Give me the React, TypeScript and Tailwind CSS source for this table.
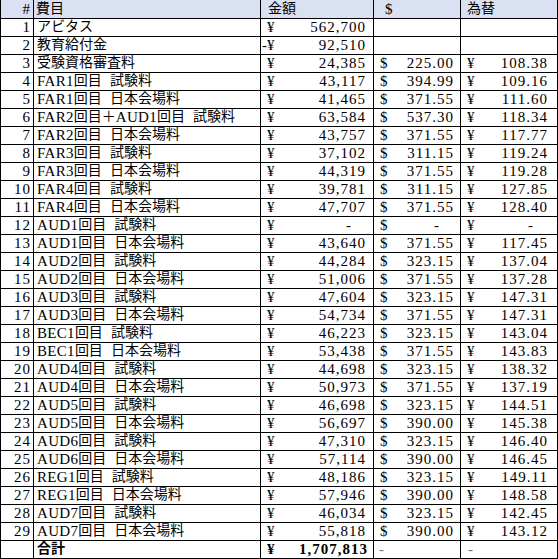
import React from "react";

type Row = {
  no: number;
  name: string;
  yen: string;
  neg?: boolean;
  usd?: string;
  rate?: string;
};

const ROWS: Row[] = [
  { no: 1, name: "アビタス", yen: "562,700" },
  { no: 2, name: "教育給付金", yen: "92,510", neg: true },
  { no: 3, name: "受験資格審査料", yen: "24,385", usd: "225.00", rate: "108.38" },
  { no: 4, name: "FAR1回目 試験料", yen: "43,117", usd: "394.99", rate: "109.16" },
  { no: 5, name: "FAR1回目 日本会場料", yen: "41,465", usd: "371.55", rate: "111.60" },
  { no: 6, name: "FAR2回目＋AUD1回目 試験料", yen: "63,584", usd: "537.30", rate: "118.34" },
  { no: 7, name: "FAR2回目 日本会場料", yen: "43,757", usd: "371.55", rate: "117.77" },
  { no: 8, name: "FAR3回目 試験料", yen: "37,102", usd: "311.15", rate: "119.24" },
  { no: 9, name: "FAR3回目 日本会場料", yen: "44,319", usd: "371.55", rate: "119.28" },
  { no: 10, name: "FAR4回目 試験料", yen: "39,781", usd: "311.15", rate: "127.85" },
  { no: 11, name: "FAR4回目 日本会場料", yen: "47,707", usd: "371.55", rate: "128.40" },
  { no: 12, name: "AUD1回目 試験料", yen: "-", usd: "-", rate: "-" },
  { no: 13, name: "AUD1回目 日本会場料", yen: "43,640", usd: "371.55", rate: "117.45" },
  { no: 14, name: "AUD2回目 試験料", yen: "44,284", usd: "323.15", rate: "137.04" },
  { no: 15, name: "AUD2回目 日本会場料", yen: "51,006", usd: "371.55", rate: "137.28" },
  { no: 16, name: "AUD3回目 試験料", yen: "47,604", usd: "323.15", rate: "147.31" },
  { no: 17, name: "AUD3回目 日本会場料", yen: "54,734", usd: "371.55", rate: "147.31" },
  { no: 18, name: "BEC1回目 試験料", yen: "46,223", usd: "323.15", rate: "143.04" },
  { no: 19, name: "BEC1回目 日本会場料", yen: "53,438", usd: "371.55", rate: "143.83" },
  { no: 20, name: "AUD4回目 試験料", yen: "44,698", usd: "323.15", rate: "138.32" },
  { no: 21, name: "AUD4回目 日本会場料", yen: "50,973", usd: "371.55", rate: "137.19" },
  { no: 22, name: "AUD5回目 試験料", yen: "46,698", usd: "323.15", rate: "144.51" },
  { no: 23, name: "AUD5回目 日本会場料", yen: "56,697", usd: "390.00", rate: "145.38" },
  { no: 24, name: "AUD6回目 試験料", yen: "47,310", usd: "323.15", rate: "146.40" },
  { no: 25, name: "AUD6回目 日本会場料", yen: "57,114", usd: "390.00", rate: "146.45" },
  { no: 26, name: "REG1回目 試験料", yen: "48,186", usd: "323.15", rate: "149.11" },
  { no: 27, name: "REG1回目 日本会場料", yen: "57,946", usd: "390.00", rate: "148.58" },
  { no: 28, name: "AUD7回目 試験料", yen: "46,034", usd: "323.15", rate: "142.45" },
  { no: 29, name: "AUD7回目 日本会場料", yen: "55,818", usd: "390.00", rate: "143.12" },
];

const GRID = "grid grid-cols-[33px_227px_113px_87px_97px]";
const CELL = "border-r border-b border-black overflow-hidden whitespace-nowrap";

// japanese runs are drawn a bit smaller than the latin text, like the sheet
function Mixed({ text }: { text: string }) {
  const parts = text.match(/[\u3000-\u9fff\uff00-\uffef]+|[^\u3000-\u9fff\uff00-\uffef]+/g) ?? [];
  return (
    <>
      {parts.map((p, i) =>
        /[\u3000-\u9fff\uff00-\uffef]/.test(p) ? (
          <span key={i} className="text-[14px]">
            {p}
          </span>
        ) : (
          <span key={i} className="tracking-[0.3px]">
            {p.replace(/ /g, "\u00a0\u00a0")}
          </span>
        ),
      )}
    </>
  );
}

function Money({
  sign,
  value,
  neg,
  pr,
}: {
  sign: string;
  value?: string;
  neg?: boolean;
  pr: string;
}) {
  if (!value) return <div className={CELL} />;
  const dash = value === "-";
  return (
    <div className={`${CELL} flex items-end justify-between pb-[1px] ${neg ? "pl-[1px]" : "pl-[6px]"} ${pr}`}>
      <span>{neg ? `-${sign}` : sign}</span>
      <span className={dash ? "mr-[14px]" : "tracking-[1px] -mr-[1px]"}>{value}</span>
    </div>
  );
}

export default function App() {
  return (
    <div
      className="w-[558px] bg-white text-black text-[15px] leading-[16px] border-l border-black"
      style={{ fontFamily: '"Liberation Serif", "Noto Sans CJK JP", serif' }}
    >
      <div className={`${GRID} h-[19px] bg-[#d9e1f2]`}>
        <div className={`${CELL} flex items-end justify-end pr-[3px] pb-[1px]`}>#</div>
        <div className={`${CELL} flex items-end pl-[2px] pb-[1px]`}>
          <Mixed text="費目" />
        </div>
        <div className={`${CELL} flex items-end pl-[7px] pb-[1px]`}>
          <Mixed text="金額" />
        </div>
        <div className={`${CELL} flex items-end pl-[11px] pb-[1px]`}>$</div>
        <div className={`${CELL} flex items-end pl-[6px] pb-[1px]`}>
          <Mixed text="為替" />
        </div>
      </div>

      {ROWS.map((r) => (
        <div key={r.no} className={`${GRID} h-[18px]`}>
          <div className={`${CELL} flex items-end justify-end pr-[2px] pb-[1px] tracking-[1px]`}>{r.no}</div>
          <div className={`${CELL} flex items-end pl-[3px] pb-[1px]`}>
            <Mixed text={r.name} />
          </div>
          <Money sign="¥" value={r.yen} neg={r.neg} pr="pr-[8px]" />
          <Money sign="$" value={r.usd} pr="pr-[7px]" />
          <Money sign="¥" value={r.rate} pr="pr-[10px]" />
        </div>
      ))}

      <div className={`${GRID} h-[18px] font-bold`}>
        <div className={CELL} />
        <div className={`${CELL} flex items-end pl-[3px] pb-[1px]`}>
          <Mixed text="合計" />
        </div>
        <div className={`${CELL} flex items-end justify-between pl-[6px] pr-[6px] pb-[1px]`}>
          <span>¥</span>
          <span className="tracking-[1px] -mr-[1px]">1,707,813</span>
        </div>
        <div className={`${CELL} flex items-end pl-[5px] pb-[1px] font-normal text-gray-500`}>-</div>
        <div className={`${CELL} flex items-end pl-[7px] pb-[1px] font-normal text-gray-500`}>-</div>
      </div>
    </div>
  );
}
